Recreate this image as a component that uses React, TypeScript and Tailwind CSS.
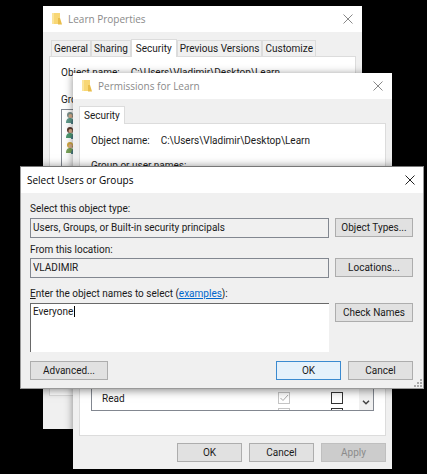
import { FC, ReactNode } from "react";

const FolderIcon: FC = () => (
  <svg className="h-3 w-3 shrink-0" viewBox="0 0 12 12" aria-hidden="true">
    <path d="M1 0h8v11H1z" fill="#f8d775" />
    <path d="M7 5h2l2 6.500H7z" fill="#e9bd4b" />
    <path d="M1 0h2v11H1z" fill="#fbe49b" />
  </svg>
);

const CloseIcon: FC = () => (
  <svg className="h-[10px] w-[10px]" viewBox="0 0 10 10" fill="none" stroke="currentColor" aria-hidden="true">
    <path d="M.5.5l9 9M9.500.5l-9 9" />
  </svg>
);

interface UsersIconProps {
  hair: string;
  shirt: string;
}

const UsersIcon: FC<UsersIconProps> = ({ hair, shirt }) => (
  <svg className="h-[13px] w-[13px]" viewBox="0 0 13 13" aria-hidden="true">
    <path d="M0 12c0-4 2-5 4-5s4 1 4 5z" fill={shirt} />
    <circle cx="4" cy="4" r="3" fill={hair} />
    <circle cx="4.500" cy="5" r="2" fill="#d9ae8c" />
    <path d="M5 13c0-4 2-5 4-5s4 1 4 5z" fill="#4d7f86" />
    <circle cx="9" cy="6" r="2.500" fill="#6d4c3a" />
  </svg>
);

interface TitleBarProps {
  title: string;
  icon?: ReactNode;
  active?: boolean;
}

const TitleBar: FC<TitleBarProps> = ({ title, icon, active }) => (
  <header
    className={`flex h-[26px] items-center bg-white font-['Open_Sans',sans-serif] text-[10px] ${
      active ? "pr-2 pl-[6px] text-black" : "gap-[5px] pr-[9px] pl-2 text-[#8a8a8a]"
    }`}
  >
    {icon}
    <h2 className="flex-1">{title}</h2>
    <button type="button" aria-label="Close" className={active ? "text-[#222]" : "text-[#888]"}>
      <CloseIcon />
    </button>
  </header>
);

interface PushButtonProps {
  children: ReactNode;
  className?: string;
  kind?: "normal" | "default" | "disabled";
}

const kinds = {
  normal: "border-[#adadad] bg-[#e1e1e1]",
  default: "border-[#3b8ad0] bg-[#e5f1fb]",
  disabled: "border-[#bfbfbf] bg-[#cccccc] text-[#8b8b8b]",
};

const PushButton: FC<PushButtonProps> = ({ children, className = "", kind = "normal" }) => (
  <button
    type="button"
    disabled={kind === "disabled"}
    className={`h-[19px] border pt-px text-center leading-4 ${kinds[kind]} ${className}`}
  >
    {children}
  </button>
);

interface TabProps {
  children: ReactNode;
  selected?: boolean;
}

const Tab: FC<TabProps> = ({ children, selected }) => (
  <button
    type="button"
    role="tab"
    aria-selected={!!selected}
    className={
      selected
        ? "relative -mb-px h-[18px] border border-b-0 border-[#dcdcdc] bg-white px-1 whitespace-nowrap"
        : "h-4 border border-b-0 border-[#dcdcdc] px-[2px] whitespace-nowrap"
    }
  >
    {children}
  </button>
);

const LearnProperties: FC = () => (
  <section className="absolute top-[6px] right-[65px] left-[43px] bg-[#f0f0f0]">
    <TitleBar title="Learn Properties" icon={<FolderIcon />} />
    <div className="px-[6px] pt-[7px] pb-[33px]">
      <div role="tablist" className="flex items-end pl-[2px]">
        <Tab>General</Tab>
        <Tab>Sharing</Tab>
        <Tab selected>Security</Tab>
        <Tab>Previous Versions</Tab>
        <Tab>Customize</Tab>
      </div>
      <div className="h-[340px] border border-[#dcdcdc] bg-white px-[11px] pt-[10px]">
        <p className="flex gap-[11px]">
          <span>Object name:</span>
          <span>C:\Users\Vladimir\Desktop\Learn</span>
        </p>
        <p className="mt-[15px]">Group or user names:</p>
        <div className="mt-[3px] flex h-24 flex-col gap-[2px] border border-[#828790] pt-px pl-1">
          <UsersIcon hair="#7b8f8a" shirt="#5f9a8b" />
          <UsersIcon hair="#5b3a2e" shirt="#4f9a72" />
          <UsersIcon hair="#d0a840" shirt="#79a35a" />
        </div>
      </div>
    </div>
  </section>
);

const Permissions: FC = () => (
  <section className="absolute top-[73px] right-[35px] left-[73px] bg-[#f0f0f0] shadow-[0_1px_8px_rgba(0,0,0,0.45)]">
    <TitleBar title="Permissions for Learn" icon={<FolderIcon />} />
    <div className="px-[6px] pt-[7px] pb-[7px]">
      <div role="tablist" className="flex items-end">
        <Tab selected>Security</Tab>
      </div>
      <div className="flex h-[313px] flex-col border border-[#dcdcdc] bg-white px-[11px] pt-[11px] pb-6">
        <p className="flex gap-[11px]">
          <span>Object name:</span>
          <span>C:\Users\Vladimir\Desktop\Learn</span>
        </p>
        <p className="mt-[13px]">Group or user names:</p>
        <div className="mt-1 flex flex-1 items-end overflow-hidden border border-[#828790]">
          <table className="flex-1">
            <tbody>
              <tr className="h-4 align-bottom">
                <th scope="row" className="pb-[3px] pl-[10px] text-left font-normal">
                  Read
                </th>
                <td className="w-[53px]">
                  <span className="grid h-4 w-3">
                    <input
                      type="checkbox"
                      aria-label="Allow Read"
                      checked
                      disabled
                      readOnly
                      className="col-start-1 row-start-1 h-3 w-3 appearance-none border border-[#c4c4c4] bg-white"
                    />
                    <svg
                      className="col-start-1 row-start-1 h-3 w-3"
                      viewBox="0 0 12 12"
                      fill="none"
                      stroke="#aaa"
                      aria-hidden="true"
                    >
                      <path d="M2.500 6l2.500 2.500 5-5.500" />
                    </svg>
                  </span>
                </td>
                <td className="w-7">
                  <span className="grid h-4 w-3">
                    <input
                      type="checkbox"
                      aria-label="Deny Read"
                      className="h-3 w-3 appearance-none border border-[#333] bg-white"
                    />
                  </span>
                </td>
              </tr>
              <tr aria-hidden="true">
                <td />
                <td>
                  <span className="block h-[2px] w-3 border border-b-0 border-[#c4c4c4]" />
                </td>
                <td>
                  <span className="block h-[2px] w-3 border border-b-0 border-[#333]" />
                </td>
              </tr>
            </tbody>
          </table>
          <button
            type="button"
            aria-label="Scroll down"
            className="flex h-full w-[14px] items-end justify-center bg-[#f0f0f0] pb-[5px]"
          >
            <svg className="h-[5px] w-2" viewBox="0 0 8 5" fill="none" stroke="#444" strokeWidth="1.500" aria-hidden="true">
              <path d="M1 .7l3 3 3-3" />
            </svg>
          </button>
        </div>
      </div>
      <div className="mt-[7px] flex justify-end gap-[7px]">
        <PushButton className="w-[65px]">OK</PushButton>
        <PushButton className="w-[65px]">Cancel</PushButton>
        <PushButton className="w-[65px]" kind="disabled">
          Apply
        </PushButton>
      </div>
    </div>
  </section>
);

const SelectUsers: FC = () => (
  <section className="absolute top-[166px] right-[3px] left-[20px] border border-[#999] border-t-[#777] bg-[#f0f0f0] shadow-[0_1px_9px_rgba(0,0,0,0.5)]">
    <TitleBar title="Select Users or Groups" active />
    <form className="pt-[10px] pr-[10px] pb-2 pl-[9px]">
      <div className="grid grid-cols-[1fr_78px] gap-x-[6px]">
        <label htmlFor="object-type" className="col-span-2 pb-[3px]">
          Select this object type:
        </label>
        <input
          id="object-type"
          readOnly
          defaultValue="Users, Groups, or Built-in security principals"
          className="h-5 border border-[#828790] bg-[#f0f0f0] px-[2px] pb-[2px]"
        />
        <PushButton>Object Types...</PushButton>
        <label htmlFor="location" className="col-span-2 pt-[6px] pb-[2px]">
          From this location:
        </label>
        <input
          id="location"
          readOnly
          defaultValue="VLADIMIR"
          className="h-5 border border-[#828790] bg-[#f0f0f0] px-[2px] pb-[2px]"
        />
        <PushButton>Locations...</PushButton>
        <p className="col-span-2 pt-[10px] pb-[3px]">
          <label htmlFor="names">
            <u>E</u>nter the object names to select (
          </label>
          <a href="#examples" className="text-[#0066cc] underline">
            examples
          </a>
          ):
        </p>
        <div className="relative h-[49px]">
          <textarea
            id="names"
            defaultValue="Everyone"
            className="block h-full w-full resize-none border-t border-l border-[#696969] bg-white px-[2px] pt-[2px] outline-none"
          />
          <span className="absolute top-[3px] left-[44px] h-[11px] w-px bg-black" />
        </div>
        <PushButton>Check Names</PushButton>
      </div>
      <div className="mt-[9px] flex gap-[7px]">
        <PushButton className="mr-auto w-[78px]">Advanced...</PushButton>
        <PushButton className="w-[65px]" kind="default">
          OK
        </PushButton>
        <PushButton className="w-[65px]">Cancel</PushButton>
      </div>
    </form>
    <svg className="absolute right-px bottom-px h-2 w-2" viewBox="0 0 8 8" fill="#aaa" aria-hidden="true">
      <path d="M6 0h2v2H6zM3 3h2v2H3zM6 3h2v2H6zM0 6h2v2H0zM3 6h2v2H3zM6 6h2v2H6z" />
    </svg>
  </section>
);

export default function App() {
  return (
    <main className="relative min-h-screen overflow-hidden bg-black font-['Roboto',sans-serif] text-[10px] leading-3 text-[#1a1a1a]">
      <LearnProperties />
      <Permissions />
      <SelectUsers />
    </main>
  );
}
